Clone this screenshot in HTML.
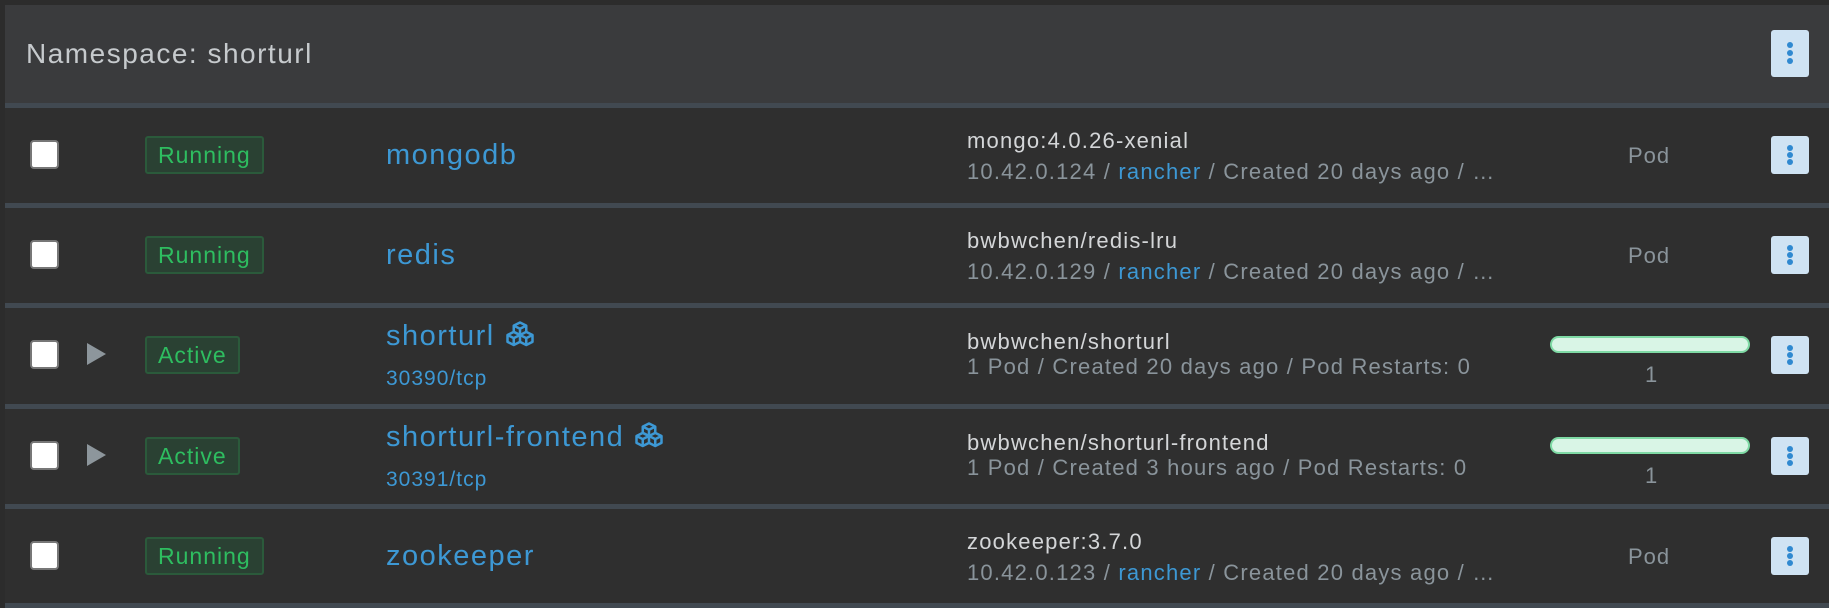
<!DOCTYPE html>
<html><head><meta charset="utf-8"><style>
*{margin:0;padding:0;box-sizing:border-box}
body{width:1829px;height:608px;background:#2c2c2c;font-family:"Liberation Sans",sans-serif;position:relative;overflow:hidden}
.hdr{position:absolute;left:5px;right:0;top:5px;height:98px;background:#3a3b3d}
.hdr .t{position:absolute;left:21px;top:33px;font-size:28px;color:#c6cacd;letter-spacing:1.5px}
.sep{position:absolute;left:5px;right:0;height:5px;background:#414951}
.row{position:absolute;left:5px;right:0;background:#2f2f2f}
.cb{position:absolute;left:25px;width:29px;height:29px;background:#fff;border:2px solid #777;border-radius:4px}
.tri{position:absolute;left:82px;width:0;height:0;border-top:11px solid transparent;border-bottom:11px solid transparent;border-left:19px solid #8d969c}
.badge{position:absolute;left:140px;height:38px;background:#2a4133;border:2px solid #2b5a3b;border-radius:3px;color:#2ebd60;font-size:23px;line-height:34px;padding:0 11px;letter-spacing:1px}
.name{position:absolute;left:381px;font-size:29px;color:#3d98d4;white-space:nowrap;letter-spacing:1.5px}
.port{position:absolute;left:381px;font-size:21px;color:#3d98d4;letter-spacing:1px}
.img{position:absolute;left:962px;font-size:22px;color:#d4d6d8;white-space:nowrap;letter-spacing:1.2px}
.sub{position:absolute;left:962px;width:535px;font-size:22px;color:#8a949b;white-space:nowrap;overflow:hidden;text-overflow:ellipsis;letter-spacing:1.2px}
.sub b{font-weight:normal;color:#3d98d4}
.pod{position:absolute;left:1623px;font-size:22px;color:#8a949b;letter-spacing:1px}
.bar{position:absolute;left:1545px;width:200px;height:17px;background:#d9f5e6;border:2px solid #7fdaa5;border-radius:9px}
.one{position:absolute;left:1640px;font-size:22px;color:#8a949b}
.btn{position:absolute;left:1766px;width:38px;height:38px;background:#cfe3f3;border-radius:3px}
.btn i{position:absolute;left:16px;width:6px;height:6px;border-radius:3px;background:#2f89d0}
.ic{display:inline-block;vertical-align:middle;margin-left:10px;margin-top:-4px}
</style></head><body>
<div class="hdr"><div class="t">Namespace: shorturl</div>
<div class="btn" style="top:25px;left:1766px;height:47px"><i style="top:12px"></i><i style="top:20px"></i><i style="top:28px"></i></div></div>
<div class="sep" style="top:103px"></div>

<div class="row" style="top:108px;height:95px">
<div class="cb" style="top:32px"></div>
<div class="badge" style="top:28px">Running</div>
<div class="name" style="top:31px">mongodb</div>
<div class="img" style="top:20px">mongo:4.0.26-xenial</div>
<div class="sub" style="top:51px">10.42.0.124 / <b>rancher</b> / Created 20 days ago / Pod Restarts: 0</div>
<div class="pod" style="top:35px">Pod</div>
<div class="btn" style="top:28px"><i style="top:9px"></i><i style="top:16px"></i><i style="top:23px"></i></div>
</div>
<div class="sep" style="top:203px"></div>

<div class="row" style="top:208px;height:95px">
<div class="cb" style="top:32px"></div>
<div class="badge" style="top:28px">Running</div>
<div class="name" style="top:31px">redis</div>
<div class="img" style="top:20px">bwbwchen/redis-lru</div>
<div class="sub" style="top:51px">10.42.0.129 / <b>rancher</b> / Created 20 days ago / Pod Restarts: 0</div>
<div class="pod" style="top:35px">Pod</div>
<div class="btn" style="top:28px"><i style="top:9px"></i><i style="top:16px"></i><i style="top:23px"></i></div>
</div>
<div class="sep" style="top:303px"></div>

<div class="row" style="top:308px;height:96px">
<div class="cb" style="top:32px"></div>
<div class="tri" style="top:35px"></div>
<div class="badge" style="top:28px">Active</div>
<div class="name" style="top:12px">shorturl<svg class="ic" width="30" height="30" viewBox="0 0 24 24" fill="none" stroke="#3d98d4" stroke-width="2" stroke-linejoin="round"><path d="M12 2l5 2.5v5l-5 2.5-5-2.5v-5z M7 4.5l5 2.5 5-2.5 M12 7v5"/><path d="M7 9.5l5 2.5v5.5l-5 2.5-5-2.5v-5.5z M2 12l5 2.5 5-2.5 M7 14.5v5.5"/><path d="M17 9.5l5 2.5v5.5l-5 2.5-5-2.5 M12 12l5 2.5 5-2.5 M17 14.5v5.5"/></svg></div>
<div class="port" style="top:59px">30390/tcp</div>
<div class="img" style="top:21px">bwbwchen/shorturl</div>
<div class="sub" style="top:46px">1 Pod / Created 20 days ago / Pod Restarts: 0</div>
<div class="bar" style="top:28px"></div>
<div class="one" style="top:54px">1</div>
<div class="btn" style="top:28px"><i style="top:9px"></i><i style="top:16px"></i><i style="top:23px"></i></div>
</div>
<div class="sep" style="top:404px"></div>

<div class="row" style="top:409px;height:95px">
<div class="cb" style="top:32px"></div>
<div class="tri" style="top:35px"></div>
<div class="badge" style="top:28px">Active</div>
<div class="name" style="top:12px">shorturl-frontend<svg class="ic" width="30" height="30" viewBox="0 0 24 24" fill="none" stroke="#3d98d4" stroke-width="2" stroke-linejoin="round"><path d="M12 2l5 2.5v5l-5 2.5-5-2.5v-5z M7 4.5l5 2.5 5-2.5 M12 7v5"/><path d="M7 9.5l5 2.5v5.5l-5 2.5-5-2.5v-5.5z M2 12l5 2.5 5-2.5 M7 14.5v5.5"/><path d="M17 9.5l5 2.5v5.5l-5 2.5-5-2.5 M12 12l5 2.5 5-2.5 M17 14.5v5.5"/></svg></div>
<div class="port" style="top:59px">30391/tcp</div>
<div class="img" style="top:21px">bwbwchen/shorturl-frontend</div>
<div class="sub" style="top:46px">1 Pod / Created 3 hours ago / Pod Restarts: 0</div>
<div class="bar" style="top:28px"></div>
<div class="one" style="top:54px">1</div>
<div class="btn" style="top:28px"><i style="top:9px"></i><i style="top:16px"></i><i style="top:23px"></i></div>
</div>
<div class="sep" style="top:504px"></div>

<div class="row" style="top:509px;height:94px">
<div class="cb" style="top:32px"></div>
<div class="badge" style="top:28px">Running</div>
<div class="name" style="top:31px">zookeeper</div>
<div class="img" style="top:20px">zookeeper:3.7.0</div>
<div class="sub" style="top:51px">10.42.0.123 / <b>rancher</b> / Created 20 days ago / Pod Restarts: 0</div>
<div class="pod" style="top:35px">Pod</div>
<div class="btn" style="top:28px"><i style="top:9px"></i><i style="top:16px"></i><i style="top:23px"></i></div>
</div>
<div class="sep" style="top:603px"></div>
</body></html>
